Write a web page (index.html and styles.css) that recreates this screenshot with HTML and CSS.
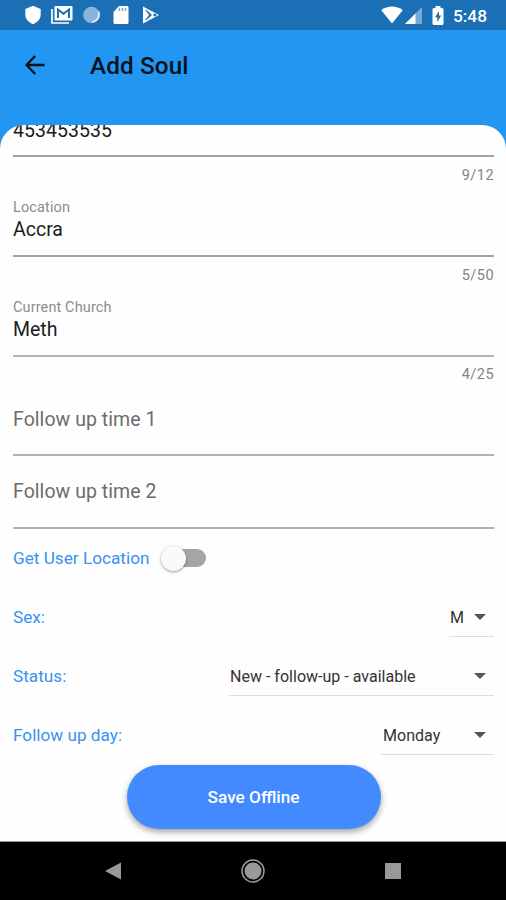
FILE: index.html
```html
<!DOCTYPE html>
<html lang="en">
<head>
<meta charset="utf-8">
<title>Add Soul</title>
<link rel="stylesheet" href="styles.css">
</head>
<body>
<div class="screen">
  <header class="status-bar">
    <div class="notifications">
      <svg width="16" height="20" viewBox="0 0 16 20"><path fill="#fff" d="M8 .8 15.700 4v5.500c0 4.500-3.300 8-7.700 9.700C3.600 17.500.300 14 .300 9.500V4z"/></svg>
      <svg width="22" height="20" viewBox="0 0 22 20"><path fill="none" stroke="#fff" stroke-width="1.700" d="M1 4v14h17"/><rect x="3.500" y="1" width="18" height="14.500" rx="1" fill="#fff"/><path fill="none" stroke="#1b6fb5" stroke-width="2" d="M7 13V4.500l5.500 4.300L18 4.500V13"/></svg>
      <svg width="18" height="20" viewBox="0 0 18 20"><circle cx="9.500" cy="10" r="8.300" fill="#86b4dc"/><path fill="none" stroke="#e0eefa" stroke-width="1.800" d="M16.500 6.500c1.500 5-1 9.500-6 10.500"/></svg>
      <svg width="16" height="20" viewBox="0 0 16 20"><path fill="#fff" d="M6 1h8q1.500 0 1.500 1.500v15q0 1.500-1.500 1.500H2Q.5 19 .5 17.500V7z"/><path stroke="#6ea2d0" stroke-width="1.400" d="M6.500 3v3M9.500 3v3M12.500 3v3"/></svg>
      <svg width="18" height="20" viewBox="0 0 18 20"><path fill="#fff" d="M1 1.500 17 10 1 18.500z"/><path fill="#1b6fb5" d="m4 4.500 6 5.500-6 5.500-.6-.6L7 10 3.400 5zM11 10l1.800-1.800L15 10l-2.200 1.800z"/></svg>
    </div>
    <div class="system">
      <svg class="wifi" width="22" height="18" viewBox="0 0 22 18"><path fill="#fff" d="M.3 4.200C6-.6 16-.6 21.700 4.200L11 17.500z"/></svg>
      <svg class="signal" width="17" height="17" viewBox="0 0 17 17"><path fill="#76a9d3" d="M17 0v17H0z"/><path fill="#fff" d="M10.500 6.500V17H0z"/></svg>
      <svg class="battery" width="12" height="19" viewBox="0 0 12 19"><path fill="#fff" d="M3.500 0h5v2H10q1.500 0 1.500 1.500v14Q11.500 19 10 19H2Q.5 19 .5 17.500v-14Q.5 2 2 2h1.500z"/><path fill="#1b6fb5" d="M7 5 3 11.300h2.300V16l3.900-6.500H7z"/></svg>
      <span class="clock">5:48</span>
    </div>
  </header>
  <div class="app-bar">
    <svg class="back" width="20" height="20" viewBox="0 0 20 20"><path fill="none" stroke="#06121c" stroke-width="2.300" d="M19.500 10H2M10.200 1 1.500 10l8.700 9"/></svg>
    <h1 class="title">Add Soul</h1>
  </div>
  <main class="sheet">
    <div class="field cut"><span class="value phone">453453535</span></div>
    <div class="counter">9/12</div>
    <div class="field"><span class="label location">Location</span><span class="value accra">Accra</span></div>
    <div class="counter">5/50</div>
    <div class="field church-field"><span class="label church">Current Church</span><span class="value meth">Meth</span></div>
    <div class="counter">4/25</div>
    <div class="field time first"><span class="hint">Follow up time 1</span></div>
    <div class="field time"><span class="hint">Follow up time 2</span></div>
    <div class="switch-row"><span class="blue get">Get User Location</span><span class="switch"><span class="thumb"></span></span></div>
    <div class="row"><span class="blue sex">Sex:</span><div class="select short"><span class="m">M</span><i class="caret"></i></div></div>
    <div class="row"><span class="blue status">Status:</span><div class="select long"><span class="new">New - follow-up - available</span><i class="caret"></i></div></div>
    <div class="row"><span class="blue day">Follow up day:</span><div class="select medium"><span class="monday">Monday</span><i class="caret"></i></div></div>
    <button class="save"><span>Save Offline</span></button>
  </main>
  <nav class="nav-bar">
    <svg width="18" height="20" viewBox="0 0 18 20"><path fill="#999" d="M1 10 17 1.500v17z"/></svg>
    <svg width="26" height="26" viewBox="0 0 26 26"><circle cx="13" cy="13" r="11" fill="none" stroke="#999" stroke-width="1.500"/><circle cx="13" cy="13" r="8.500" fill="#999"/></svg>
    <svg width="18" height="20" viewBox="0 0 18 20"><path fill="#999" d="M1 2h16v16H1z"/></svg>
  </nav>
</div>
</body>
</html>
```
FILE: styles.css
```css
* { box-sizing: border-box; }
body { margin: 0; font-family: Roboto, sans-serif; }
.screen { display: flex; flex-direction: column; width: 506px; height: 900px; overflow: hidden; background: #2196f3; }
.status-bar { display: flex; justify-content: space-between; flex: none; height: 30px; padding: 5px 18px 0 25px; background: #1b6fb5; }
.notifications { display: flex; gap: 10px; }
.notifications svg:nth-child(3) { margin-left: -1px; }
.notifications svg:nth-child(4) { margin-left: 3px; }
.notifications svg:nth-child(5) { margin-left: 3px; }
.system { display: flex; align-items: flex-start; color: #fff; }
.wifi { margin: 1px 2px 0 0; }
.signal { margin: 2px 10px 0 0; }
.battery { margin: 1px 9px 0 0; }
.clock { margin-right: 1px; font-size: 17.300px; font-weight: 500; line-height: 22px; }
.app-bar { display: flex; align-items: center; flex: none; height: 95px; padding: 0 25px 25px; color: #06121c; }
.title { margin: 1px 0 0 45px; font-size: 24.300px; font-weight: 500; line-height: 30px; letter-spacing: .1px; }
.sheet { display: flex; flex-direction: column; flex: none; height: 717px; padding: 0 12px 0 13px; overflow: hidden; background: #fefefe; border-radius: 24px 24px 0 0; border-bottom: 1px solid #999; }
.field { display: flex; flex-direction: column; flex: none; height: 63px; border-bottom: 2px solid #a3a3a3; white-space: nowrap; }
.cut { height: 32px; }
.cut .value { margin-top: -7px; letter-spacing: .05px; }
.counter { flex: none; height: 37px; padding-top: 9px; font-size: 14.500px; line-height: 20px; letter-spacing: .45px; text-align: right; color: #858585; }
.label { align-self: flex-start; margin-top: 5px; font-size: 14.500px; line-height: 18px; letter-spacing: .12px; color: #8c8c8c; }
.value { align-self: flex-start; font-size: 19.500px; line-height: 26px; color: #1c1c1c; }
.church-field { height: 63px; border-color: #b5b5b5; }
.church-field + .counter { height: 36px; padding-top: 8px; }
.time { height: 73px; border-color: #b2b2b2; }
.first { height: 63px; }
.hint { align-self: flex-start; margin-top: 23px; font-size: 19.500px; line-height: 26px; letter-spacing: .05px; color: #6c6c6c; }
.first .hint { margin-top: 14px; }
.switch-row { display: flex; align-items: center; flex: none; height: 58px; }
.blue { font-size: 17.200px; line-height: 24px; color: #3a91ef; white-space: nowrap; }
.switch { display: flex; align-items: center; width: 41px; height: 18px; margin-left: 16px; border-radius: 9px; background: linear-gradient(90deg, transparent 40%, #a5a5a5 40%); }
.thumb { width: 25px; height: 25px; margin-left: -4px; border-radius: 50%; background: #fafafa; box-shadow: 0 1px 3px rgba(0,0,0,.4); }
.row { display: flex; justify-content: space-between; align-items: center; flex: none; height: 59px; }
.select { display: flex; justify-content: space-between; align-items: center; height: 39px; margin-top: 1px; border-bottom: 1px solid #ddd; padding: 1px 8px 0 1px; font-size: 16.050px; color: #333; white-space: nowrap; }
.short { width: 45px; }
.long { width: 265px; }
.medium { width: 113px; padding-left: 2px; }
.caret { border: 6px solid transparent; border-top-color: #555; border-bottom: 0; }
.save { align-self: center; flex: none; width: 254px; height: 64px; margin-top: 1px; padding: 0; border: 0; border-radius: 32px; background: #448aff; color: #fff; font: 500 17.200px Roboto, sans-serif; box-shadow: 0 3px 6px rgba(0,0,0,.36); }
.nav-bar { display: flex; justify-content: space-between; align-items: center; flex: none; height: 58px; padding: 0 104px; background: #000; }
```
